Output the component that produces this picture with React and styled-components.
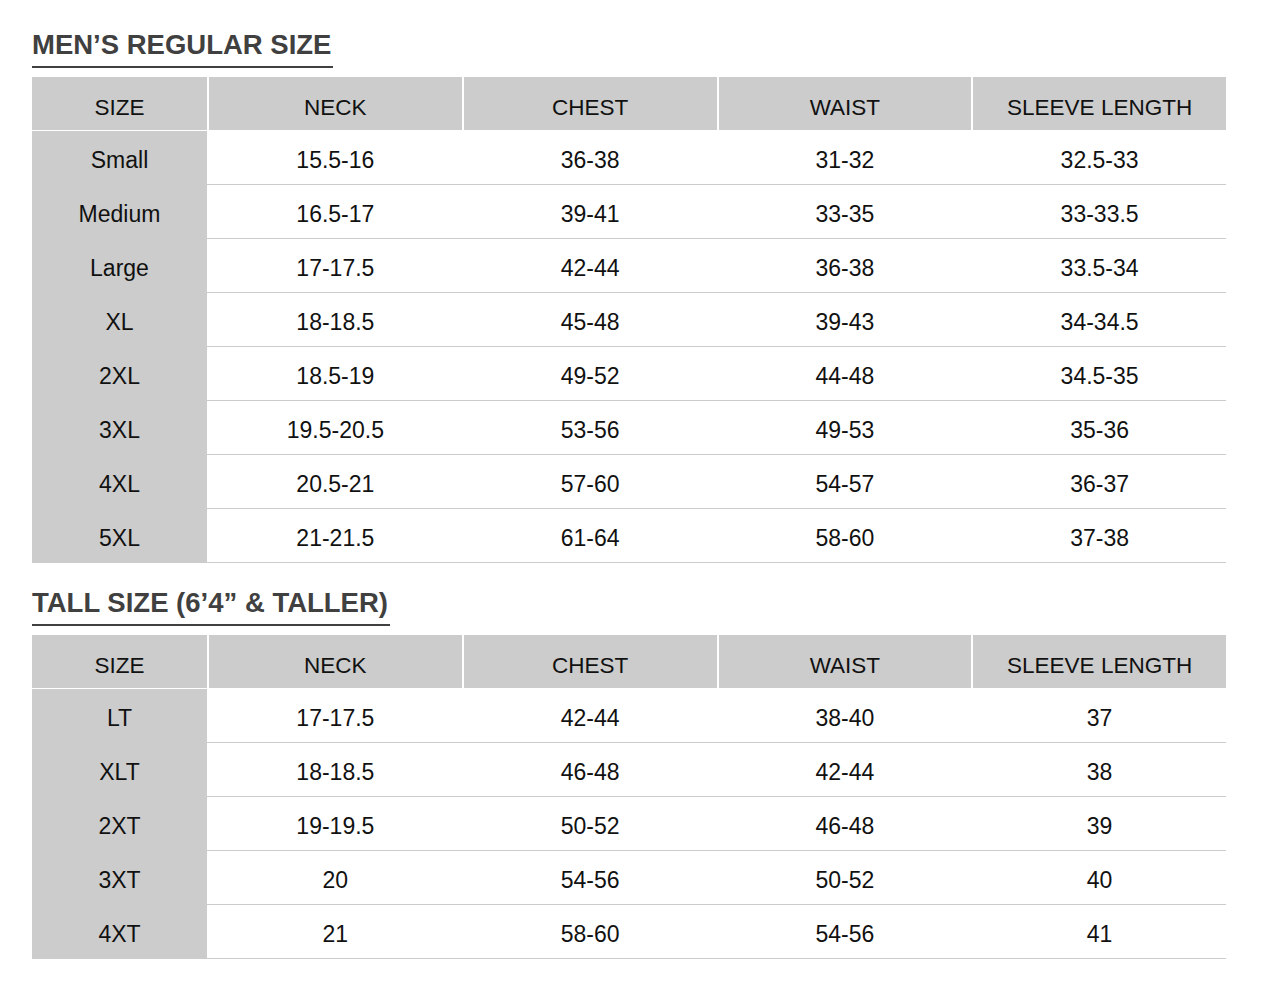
import React from 'react'
import styled, { createGlobalStyle } from 'styled-components'

const GlobalStyle = createGlobalStyle`
  body {
    margin: 0;
    background: #fff;
    font-family: "Liberation Sans", Arial, Helvetica, sans-serif;
  }
`

const Page = styled.div`
  padding: 29px 35px 20px 32px;
`

const Section = styled.section`
  & + & {
    margin-top: 24px;
  }
`

const Title = styled.h2`
  display: inline-block;
  margin: 0 0 9px;
  padding: 0 2px 5px 0;
  font-size: 27.5px;
  line-height: 32px;
  font-weight: 700;
  color: #404040;
  border-bottom: 2px solid #404040;
`

const Table = styled.div`
  width: 1194px;
`

const Row = styled.div`
  display: grid;
  grid-template-columns: 175px repeat(4, 1fr);
  column-gap: 2px;
  height: ${p => (p.$head ? '53px' : '54px')};
  margin-bottom: ${p => (p.$head ? '1px' : '0')};
  border-bottom: ${p => (p.$head ? 'none' : '1px solid #ccc')};
  box-sizing: border-box;
`

const Cell = styled.div`
  display: flex;
  align-items: center;
  justify-content: center;
  padding-top: ${p => (p.$head ? '8px' : '5px')};
  box-sizing: border-box;
  background: ${p => (p.$gray ? '#ccc' : '#fff')};
  font-size: ${p => (p.$head ? '22.5px' : '23px')};
  color: #111;
`

const regular = [
  ['Small', '15.5-16', '36-38', '31-32', '32.5-33'],
  ['Medium', '16.5-17', '39-41', '33-35', '33-33.5'],
  ['Large', '17-17.5', '42-44', '36-38', '33.5-34'],
  ['XL', '18-18.5', '45-48', '39-43', '34-34.5'],
  ['2XL', '18.5-19', '49-52', '44-48', '34.5-35'],
  ['3XL', '19.5-20.5', '53-56', '49-53', '35-36'],
  ['4XL', '20.5-21', '57-60', '54-57', '36-37'],
  ['5XL', '21-21.5', '61-64', '58-60', '37-38'],
]

const tall = [
  ['LT', '17-17.5', '42-44', '38-40', '37'],
  ['XLT', '18-18.5', '46-48', '42-44', '38'],
  ['2XT', '19-19.5', '50-52', '46-48', '39'],
  ['3XT', '20', '54-56', '50-52', '40'],
  ['4XT', '21', '58-60', '54-56', '41'],
]

const headers = ['SIZE', 'NECK', 'CHEST', 'WAIST', 'SLEEVE LENGTH']

const SizeTable = ({ title, rows }) => (
  <Section>
    <Title>{title}</Title>
    <Table>
      <Row $head>
        {headers.map(h => (
          <Cell key={h} $gray $head>{h}</Cell>
        ))}
      </Row>
      {rows.map(r => (
        <Row key={r[0]}>
          {r.map((v, i) => (
            <Cell key={i} $gray={i === 0}>{v}</Cell>
          ))}
        </Row>
      ))}
    </Table>
  </Section>
)

const App = () => {
  return (
    <Page>
      <GlobalStyle />
      <SizeTable title="MEN’S REGULAR SIZE" rows={regular} />
      <SizeTable title="TALL SIZE (6’4” & TALLER)" rows={tall} />
    </Page>
  )
}

export default App
